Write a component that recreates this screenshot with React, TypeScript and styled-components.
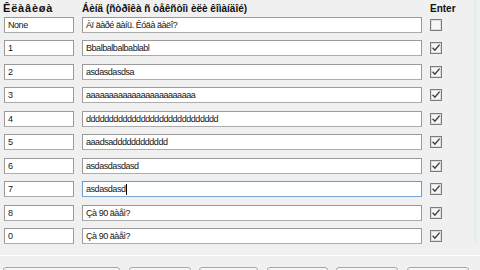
import styled, { createGlobalStyle } from 'styled-components';

interface BindRow {
  key: string;
  text: string;
  enter: boolean;
  focused?: boolean;
}

const rows: BindRow[] = [
  { key: 'None', text: 'Àï äàðé äàíü. Êóäà äàëî?', enter: false },
  { key: '1', text: 'Bbalbalbalbablabl', enter: true },
  { key: '2', text: 'asdasdasdsa', enter: true },
  { key: '3', text: 'aaaaaaaaaaaaaaaaaaaaaaaa', enter: true },
  { key: '4', text: 'ddddddddddddddddddddddddddddd', enter: true },
  { key: '5', text: 'aaadsadddddddddddd', enter: true },
  { key: '6', text: 'asdasdasdasd', enter: true },
  { key: '7', text: 'asdasdasd', enter: true, focused: true },
  { key: '8', text: 'Çà 90 äàåì?', enter: true },
  { key: '0', text: 'Çà 90 äàåì?', enter: true },
];

export default function App() {
  return (
    <>
      <GlobalStyle />
      <Window>
        <Table>
          <HeaderRow>
            <KeyHeading>Êëàâèøà</KeyHeading>
            <Heading>Áèíä (ñòðîêà ñ òåêñòîì èëè êîìàíäîé)</Heading>
            <Heading>Enter</Heading>
          </HeaderRow>
          <Rows>
            {rows.map((row) => (
              <Row key={row.key}>
                <Field>{row.key}</Field>
                <Field $focused={row.focused}>
                  {row.text}
                  {row.focused && <Caret />}
                </Field>
                <Check checked={row.enter} />
              </Row>
            ))}
          </Rows>
        </Table>
        <Separator />
        <ButtonBar>
          <Button $w={117} />
          <Button $w={62} />
          <Button $w={59} />
          <Button $w={61} />
          <Button $w={62} />
          <Button $w={62} />
        </ButtonBar>
      </Window>
    </>
  );
}

function Check({ checked }: { checked: boolean }) {
  return (
    <CheckBox width="12" height="12" viewBox="0 0 12 12" aria-hidden="true">
      <rect x="0.5" y="0.5" width="11" height="11" fill="#f7f7f7" stroke="#7c7c7c" />
      <rect x="1.5" y="1.5" width="9" height="9" fill="none" stroke="#dedede" />
      {checked && (
        <path d="M2.6 5.8 L4.9 8.2 L9.6 2.6" fill="none" stroke="#3e3e3e" strokeWidth="1.4" />
      )}
    </CheckBox>
  );
}

const GlobalStyle = createGlobalStyle`
  html,
  body {
    margin: 0;
    width: 480px;
    height: 270px;
    overflow: hidden;
    background: #f0f0f0;
    font-family: 'Liberation Sans', Arial, sans-serif;
  }
`;

const Window = styled.div`
  width: 480px;
  height: 270px;
  display: flex;
  flex-direction: column;
  overflow: hidden;
`;

const Table = styled.div`
  width: 477px;
  box-sizing: border-box;
  padding: 3px 0 0 4px;
  border-right: 3px solid #e2f0ec;
`;

const HeaderRow = styled.div`
  height: 14px;
  display: grid;
  grid-template-columns: 70px 340px 40px;
  column-gap: 8px;
  align-items: start;
`;

const Heading = styled.div`
  font-size: 10px;
  line-height: 11px;
  font-weight: 700;
  color: #111;
  white-space: nowrap;
`;

const KeyHeading = styled(Heading)`
  margin-left: -1px;
  font-size: 11px;
  letter-spacing: 0.8px;
`;

const Rows = styled.div`
  display: grid;
  row-gap: 7.45px;
`;

const Row = styled.div`
  display: grid;
  grid-template-columns: 70px 340px 12px;
  column-gap: 8px;
  align-items: center;
`;

const Field = styled.div<{ $focused?: boolean }>`
  height: 16px;
  box-sizing: border-box;
  display: flex;
  align-items: center;
  padding: 0 3px;
  border: 1px solid ${(p) => (p.$focused ? '#6f9cc8' : '#9a9a9a')};
  border-bottom-color: ${(p) => (p.$focused ? '#7aa8d4' : '#acacac')};
  background: #fff;
  box-shadow: ${(p) => (p.$focused ? '0 0 0 1px #e4f0f8' : 'none')};
  color: #151515;
  font-size: 9px;
  letter-spacing: -0.45px;
  white-space: nowrap;
  overflow: hidden;
`;

const Caret = styled.span`
  display: inline-block;
  width: 1px;
  height: 11px;
  margin-left: 1px;
  background: #000;
`;

const CheckBox = styled.svg`
  display: block;
`;

const Separator = styled.div`
  margin-top: 11px;
  height: 1px;
  background: #7c7c7c;
  border-bottom: 1px solid #fdfdfd;
`;

const ButtonBar = styled.div`
  display: flex;
  gap: 8.5px;
  margin-top: 11px;
  padding-left: 3px;
`;

const Button = styled.button<{ $w: number }>`
  width: ${(p) => p.$w}px;
  height: 22px;
  flex: none;
  padding: 0;
  border: 1px solid #a8a8a8;
  border-radius: 3px;
  background: linear-gradient(#f6f6f6, #e4e4e4);
`;
